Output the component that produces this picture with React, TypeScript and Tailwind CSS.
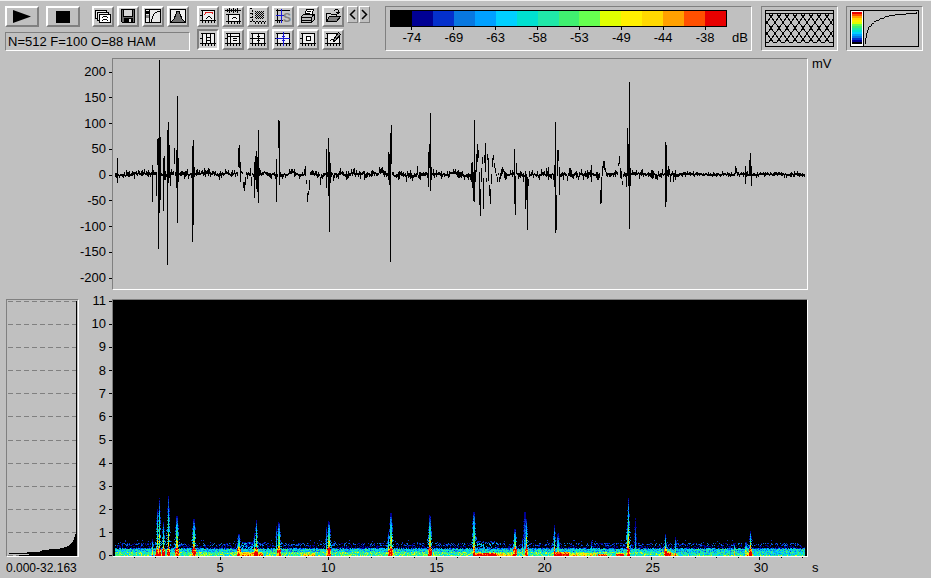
import type { ReactNode } from "react";

const PALETTE = [
  "#000000", "#000094", "#0430cc", "#0878e0", "#00a0ff", "#00d0ff", "#00e0d0", "#20e8a8",
  "#40f070", "#66ff50", "#e0ff00", "#fff000", "#ffd800", "#ffa000", "#ff5000", "#e80000",
];
const DB_LABELS = ["-74", "-69", "-63", "-58", "-53", "-49", "-44", "-38"];
const MV_LABELS = [200, 150, 100, 50, 0, -50, -100, -150, -200];
const KHZ_LABELS = [11, 10, 9, 8, 7, 6, 5, 4, 3, 2, 1, 0];
const SECONDS = [5, 10, 15, 20, 25, 30];
const PLOT_WIDTH = 694;
const DURATION = 32.163;

/* Small seeded generator, so the background noise is the same on every render. */
function makeRandom(seed: number) {
  let s = seed;
  return () => {
    s = (s + 0x6d2b79f5) | 0;
    let t = Math.imul(s ^ (s >>> 15), 1 | s);
    t = (t + Math.imul(t ^ (t >>> 7), 61 | t)) ^ t;
    return ((t ^ (t >>> 14)) >>> 0) / 4294967296;
  };
}

/* Recorded peaks: column, top, bottom. */
const PEAKS: [number, number, number][] = [
  [4, 99, 124], [39, 106, 143], [43, 113, 137], [44, 80, 106], [45, 79, 190], [46, 1, 154], [47, 78, 141],
  [50, 99, 152], [51, 97, 121], [54, 71, 206], [55, 63, 124], [56, 86, 119], [57, 113, 127], [61, 89, 105],
  [63, 91, 129], [64, 37, 164], [65, 99, 123], [79, 87, 183], [80, 81, 166], [81, 108, 118], [91, 109, 116],
  [125, 89, 108], [126, 86, 109], [127, 103, 123], [130, 123, 129], [131, 123, 132], [132, 118, 126],
  [137, 109, 117], [138, 118, 127], [141, 103, 139], [142, 97, 121], [143, 92, 130], [144, 98, 133],
  [145, 71, 144], [146, 109, 117], [163, 100, 143], [165, 61, 89], [166, 62, 126], [167, 113, 118],
  [192, 107, 117], [193, 121, 125], [194, 134, 143], [195, 132, 136], [196, 121, 131], [199, 111, 116],
  [207, 118, 126], [213, 90, 129], [215, 79, 137], [216, 93, 173], [217, 104, 124], [220, 116, 122],
  [266, 108, 114], [275, 93, 121], [276, 95, 126], [277, 74, 203], [278, 66, 105], [293, 116, 123],
  [304, 107, 116], [315, 93, 128], [316, 85, 109], [317, 54, 132], [318, 108, 121], [358, 104, 123],
  [359, 103, 129], [360, 113, 142], [361, 61, 143], [362, 111, 123], [363, 95, 113], [364, 85, 103],
  [365, 91, 99], [366, 113, 146], [367, 130, 157], [368, 109, 123], [369, 98, 105], [370, 119, 150],
  [371, 96, 104], [372, 84, 113], [373, 119, 123], [374, 95, 101], [375, 99, 122], [376, 126, 137],
  [377, 130, 145], [378, 115, 125], [379, 99, 108], [380, 96, 101], [381, 104, 109], [382, 109, 114],
  [384, 118, 123], [386, 118, 123], [389, 108, 115], [390, 110, 113], [401, 90, 145], [402, 117, 156],
  [403, 104, 115], [410, 114, 123], [412, 112, 150], [413, 115, 141], [414, 118, 171], [415, 120, 127],
  [433, 109, 118], [435, 108, 121], [441, 106, 128], [442, 63, 174], [443, 136, 171], [444, 91, 117],
  [445, 91, 102], [446, 108, 136], [454, 117, 122], [457, 109, 118], [465, 117, 121], [478, 106, 123],
  [487, 131, 145], [488, 118, 144], [489, 107, 117], [490, 102, 109], [491, 102, 111], [492, 109, 113],
  [505, 104, 107], [506, 97, 105], [507, 109, 119], [509, 122, 126], [513, 114, 128], [514, 69, 117],
  [515, 85, 127], [516, 23, 170], [517, 109, 127], [552, 83, 148], [553, 86, 143], [555, 107, 118],
  [557, 115, 123], [560, 114, 123], [562, 111, 121], [622, 107, 115], [623, 109, 114], [632, 107, 125],
  [636, 101, 117], [637, 94, 117], [638, 107, 127], [681, 112, 118],
];

function waveformPath() {
  const rnd = makeRandom(11);
  const peaks = new Set(PEAKS.map(([x]) => x));
  let d = "";
  for (const [x, top, bottom] of PEAKS) {
    d += `M${x} ${top}h1V${bottom}h-1z`;
  }
  let drift = 0;
  for (let x = 2; x < 692; x++) {
    const a = rnd();
    const b = rnd();
    drift = drift * 0.75 + (rnd() - 0.5) * (x > 560 ? 0.8 : 2);
    if (peaks.has(x)) continue;
    const calm = x > 560 ? 0.5 : 1;
    const up = Math.round(a * a * a * 4 * calm);
    const down = Math.round(b * b * b * 4 * calm);
    const mid = Math.round(114.4 + drift);
    d += `M${x} ${mid - up}h1v${up + down + 2}h-1z`;
  }
  return d;
}

/* Bursts in the spectrogram: column, height, strength, width. */
const BURSTS: [number, number, number, number][] = [
  [39, 18, 0.8, 1], [44, 50, 0.95, 1], [46, 60, 1, 1], [50, 36, 1, 1], [55, 63, 1, 1], [63, 42, 1, 2],
  [80, 38, 1.05, 2], [125, 23, 0.95, 2], [141, 24, 0.8, 1], [143, 38, 1, 1], [163, 32, 0.6, 1], [165, 35, 1, 2],
  [213, 32, 0.6, 1], [215, 36, 1.05, 2], [275, 25, 0.85, 1], [277, 45, 1, 2], [316, 42, 1.05, 2],
  [360, 47, 0.9, 2], [401, 28, 1, 2], [409, 20, 0.6, 1], [411, 51, 0.4, 2], [413, 38, 1.05, 1], [441, 32, 0.9, 1],
  [444, 24, 0.6, 2], [478, 17, 0.55, 1], [514, 36, 0.9, 1], [515, 61, 1, 1], [522, 42, 0.45, 1],
  [552, 23, 0.95, 1], [562, 20, 0.65, 1], [621, 13, 0.8, 1], [632, 15, 0.7, 2], [637, 26, 1.1, 1],
];
/* Low-frequency energy: start, end, strength, height. */
const HUMPS: [number, number, number, number][] = [
  [128, 150, 0.35, 4], [190, 202, 0.25, 3], [360, 384, 0.6, 3], [384, 400, 0.25, 3], [441, 456, 0.6, 4],
  [456, 484, 0.22, 3], [485, 494, 0.5, 2], [503, 511, 0.5, 3], [552, 558, 0.6, 5], [558, 565, 0.3, 3],
  [634, 640, 0.35, 4], [42, 52, 0.3, 4],
];

function spectrogramPaths() {
  const rnd = makeRandom(77);
  const paths: string[] = PALETTE.map(() => "");
  for (let x = 2; x < 692; x++) {
    for (let h = 0; h < 66; h++) {
      const n = rnd();
      let v = 0;
      if (h < 1) v = 0.3 + n * 0.4;
      else if (h < 4) v = (x < 560 ? 0.34 : 0.24) + n * 0.34;
      else if (h < 7) v = 0.18 + n * 0.36;
      else if (h < 8) v = n * 0.36;
      else if (h < 10) v = n > 0.65 ? 0.1 : 0;
      else if (h < 13) v = n > 0.55 ? (n - 0.5) * 0.5 : 0;
      else if (h < 16) v = n > 0.97 ? 0.13 : 0;
      if (x > 128 && x < 146 && h > 7 && h < 14) v += n * 0.22;
      if (x > 360 && x < 384 && h > 7 && h < 15) v += n > 0.5 ? 0.16 : 0;
      for (const [bx, height, strength, width] of BURSTS) {
        const f = 1 - h / height;
        if (f <= 0 || x < bx - 2 || x > bx + width + 1) continue;
        const inside = x >= bx && x < bx + width;
        const beside = x >= bx - 1 && x <= bx + width;
        if (inside) {
          v = Math.max(v, strength * Math.pow(f, 0.9) * (0.6 + n * 0.5) + (h < 9 ? 0.2 * strength : 0));
        } else if (beside) {
          if (h < 7 && strength > 0.9) v = Math.max(v, 0.65 + n * 0.45);
          else if (f > 0.25 && n > 0.5) v = Math.max(v, strength * f * n * 0.55);
        } else if (f > 0.6 && n > 0.75) {
          v = Math.max(v, strength * f * n * 0.4);
        }
      }
      for (const [a, b, strength, height] of HUMPS) {
        if (x >= a && x < b && h < height) v += strength * (1 - h / (height + 2));
      }
      const level = Math.min(15, Math.floor(v * 16));
      if (level > 0) paths[level] += `M${x} ${255 - h}h1v1h-1z`;
    }
  }
  return paths;
}

const WAVEFORM = waveformPath();
const SPECTROGRAM = spectrogramPaths();

/* Mean spectrum at the foot of the left panel: row, first column. */
const SPECTRUM: [number, number][] = [
  [228, 69], [234, 68], [237, 67], [240, 66], [242, 65], [243, 64], [244, 63], [245, 62], [246, 60],
  [247, 57], [248, 53], [249, 42], [250, 35], [251, 33], [252, 20], [253, 2], [254, 22], [255, 12],
];

const bevel = "border-2 border-t-white border-l-white border-r-[#808080] border-b-[#808080]";
const sunken = "border border-t-[#808080] border-l-[#808080] border-r-white border-b-white";

function ToolButton({ label, children, pressed = false }: { label: string; children: ReactNode; pressed?: boolean }) {
  return (
    <button
      type="button"
      aria-label={label}
      title={label}
      className={
        pressed
          ? "h-[21px] w-[22px] border-2 border-t-[#808080] border-l-[#808080] border-r-white border-b-white bg-[#d0d0d0]"
          : `h-[21px] w-[22px] bg-[#c8c8c8] ${bevel}`
      }
    >
      <svg viewBox="-1 0 18 17" className="block h-[17px] w-[18px]" shapeRendering="crispEdges" fill="none" stroke="#000">
        {children}
      </svg>
    </button>
  );
}

/* Chart frame with axis ticks, shared by most of the toolbar icons. */
function Frame() {
  return (
    <>
      <rect x="3" y="3" width="11" height="9" fill="#f0f0f0" stroke="none" />
      <path d="M2.5 2v13M14.5 2v13M1 2.5h14M0 12.5h16M0 7.5h2M5.5 13v2M8.5 13v2M11.5 13v2" />
    </>
  );
}

function WideButton({ label, children }: { label: string; children: ReactNode }) {
  return (
    <button
      type="button"
      aria-label={label}
      title={label}
      className={`flex h-[21px] w-[34px] items-center justify-center bg-[#c0c0c0] ${bevel}`}
    >
      {children}
    </button>
  );
}

function Toolbar() {
  return (
    <header className="flex items-start pt-[5px] pr-2 pl-[5px]">
      <div className="w-[185px] shrink-0">
        <div className="flex">
          <WideButton label="Play">
            <svg viewBox="0 0 20 13" className="h-[13px] w-5">
              <path d="M1 0L19 6.5L1 13z" fill="#000" />
            </svg>
          </WideButton>
          <div className="ml-[7px]">
            <WideButton label="Stop">
              <span className="h-3 w-[14px] bg-black" />
            </WideButton>
          </div>
          <div className="ml-3 flex gap-[3px]">
            <ToolButton label="Windows">
              <rect x="0.5" y="2.5" width="11" height="8" fill="#e8e8e8" />
              <rect x="2.5" y="4.5" width="11" height="8" fill="#e8e8e8" />
              <rect x="4.5" y="6.5" width="11" height="8" fill="#fff" />
              <path d="M7 9.5h1M8 8.5h4M12 9.5h1M7 12.5h1M8 11.5h4M12 12.5h1" />
            </ToolButton>
            <ToolButton label="Save">
              <path d="M1.5 1.5h13v13h-12l-1-1z" fill="#686868" />
              <rect x="4" y="2" width="8" height="6" fill="#d8d8d8" stroke="none" />
              <path d="M3.5 2v6.5h9V2" />
              <rect x="4" y="10" width="9" height="4" fill="#000" stroke="none" />
              <rect x="9" y="11" width="2" height="3" fill="#e0e0e0" stroke="none" />
            </ToolButton>
            <ToolButton label="Transfer curve">
              <rect x="0.5" y="1.5" width="15" height="13" fill="#e8e8e8" />
              <path d="M4.5 2v12" />
              <rect x="1" y="3" width="3" height="3" fill="#000" stroke="none" />
              <rect x="1" y="7" width="3" height="3" fill="#808080" stroke="none" />
              <path d="M6.5 14v-3M7.5 11V8M8.5 8V6M9.5 6V5M10 4.5h2M12 3.5h3" />
            </ToolButton>
            <ToolButton label="Window function">
              <rect x="0.5" y="1.5" width="15" height="13" fill="#f0f0f0" />
              <path d="M1 14l3-3l2-5l1-3h2l1 3l2 5l3 3z" fill="#707070" />
            </ToolButton>
          </div>
        </div>
        <div className={`mt-[5px] h-[19px] pl-[2px] text-[13px] leading-[17px] whitespace-nowrap ${sunken}`}>
          N=512 F=100 O=88 HAM
        </div>
      </div>

      <div className="ml-[7px] grid shrink-0 grid-cols-6 gap-x-[3px] gap-y-[2px]">
        <ToolButton label="Envelope">
          <Frame />
          <path d="M4 6.5h1M5.5 4v2M6 4.5h6M12.5 4v2" stroke="#e02020" />
          <path d="M6 10.5h1M7 9.5h1M8 8.5h2M10 9.5h1M11 10.5h1" />
        </ToolButton>
        <ToolButton label="Waveform">
          <rect x="4" y="7" width="10" height="6" fill="#f0f0f0" stroke="none" />
          <path d="M0 2.5h16M2.5 1v3M4.5 0v5M6.5 1v3M8.5 0v5M10.5 1v3M12.5 0v5M3.5 6v10M14.5 6v10M1 6.5h14M1 13.5h15M6.5 14v2M9.5 14v2M12.5 14v2M7 10.5h1M8 9.5h3M11 10.5h1" />
        </ToolButton>
        <ToolButton label="Select area">
          <rect x="5" y="3" width="9" height="8" fill="#c0c0c0" stroke="none" />
          <path d="M5 3.5h9M5 5.5h9M5 7.5h9M5 9.5h9" strokeDasharray="1 1" />
          <path d="M6 4.5h8M6 6.5h8M6 8.5h8M6 10.5h8" strokeDasharray="1 1" />
          <path d="M0 .5h2M2.5 2v12M0 13.5h16M0 5.5h2M0 9.5h2M5.5 14v2M8.5 14v2M11.5 14v2M14.5 14v2" strokeDasharray="2 1" />
        </ToolButton>
        <ToolButton label="Standard cursor">
          <path d="M2.5 1v14M1 2.5h14M0 12.5h8M4.5 13v2" />
          <path d="M6.5 1v14M1 7.5h8" stroke="#1818d8" />
          <text x="8" y="14" fontSize="12" fontWeight="bold" fill="#808080" stroke="none" className="font-['Liberation_Sans',sans-serif]">S</text>
        </ToolButton>
        <ToolButton label="Print">
          <path d="M4.5 7.5l2-6h7l-2 6z" fill="#fff" />
          <path d="M7 3.5h4M6 5.5h4" />
          <path d="M1.5 8.5l2-2h11v5l-3 3h-10z" fill="#b8b8b8" />
          <path d="M1 9.5h10M11.5 9v5M2 12.5h9M12 8.5l2-2" />
        </ToolButton>
        <ToolButton label="Open">
          <path d="M1.5 13.5v-8h4l1 1h5v2" fill="#d0d0d0" />
          <path d="M1.5 13.5l3-5h11l-4 5z" fill="#808080" />
          <path d="M9 2.5h1M10 1.5h3M13.5 2v3M11 4.5h4M12 5.5h2" />
        </ToolButton>

        <ToolButton label="Vertical cursors" pressed>
          <Frame />
          <path d="M6.5 2v10M10.5 2v10M7 6.5h3M7 9.5h3" />
        </ToolButton>
        <ToolButton label="Horizontal cursor">
          <Frame />
          <path d="M3 5.5h11M5.5 3v9M8 7.5h4M8 9.5h4" />
        </ToolButton>
        <ToolButton label="Crosshair">
          <Frame />
          <path d="M8.5 2v10M3 7.5h12M7 5.5h3M7 9.5h3" />
        </ToolButton>
        <ToolButton label="Linked crosshair">
          <Frame />
          <path d="M8.5 1v14M1 7.5h14M7 5.5h3M7 9.5h3" stroke="#1818d8" />
        </ToolButton>
        <ToolButton label="Zoom area">
          <Frame />
          <rect x="6.5" y="5.5" width="4" height="4" fill="#fff" />
        </ToolButton>
        <ToolButton label="Edit label">
          <Frame />
          <path d="M5 9.5h1M6 8.5h2M8 10.5h2" />
          <path d="M8.5 8.5l5-7l2 2l-5 6l-2 1z" fill="#909090" />
        </ToolButton>
      </div>

      <div className="ml-[3px] flex shrink-0 gap-px">
        {["Previous", "Next"].map((name, i) => (
          <button
            key={name}
            type="button"
            aria-label={name}
            className="flex h-[17px] w-[11px] items-center justify-center border border-t-white border-l-white border-r-[#808080] border-b-[#808080]"
          >
            <svg viewBox="0 0 7 11" className="h-[11px] w-[7px]" fill="none" stroke="#000" strokeWidth="1.5">
              <path d={i === 0 ? "M6 1L1.5 5.5L6 10" : "M1 1L5.5 5.5L1 10"} />
            </svg>
          </button>
        ))}
      </div>

      <div className={`ml-[15px] flex h-[45px] min-w-0 flex-1 pt-[3px] pl-1 ${sunken}`}>
        <div className="min-w-0 flex-1">
          <div className="flex h-[17px] border border-black">
            {PALETTE.map((color) => (
              <span key={color} className="flex-1" style={{ backgroundColor: color }} />
            ))}
          </div>
          <div className="grid grid-cols-8 px-px">
            {DB_LABELS.map((label) => (
              <span key={label} className="flex flex-col items-center text-[13px] leading-[14px]">
                <i className="mb-px h-[3px] w-px bg-black" />
                {label}
              </span>
            ))}
          </div>
        </div>
        <span className="w-6 self-end pb-[5px] pl-[5px] text-[13px] leading-[14px]">dB</span>
      </div>

      <div className={`ml-[9px] h-[45px] w-[77px] shrink-0 p-[3px] ${sunken}`}>
        <svg viewBox="0 0 69 37" className="h-[37px] w-[69px]" fill="none" stroke="#000" shapeRendering="crispEdges">
          <clipPath id="mesh">
            <rect x="1" y="3" width="67" height="31" />
          </clipPath>
          <rect x="0.5" y="0.5" width="68" height="36" />
          <path d="M1 3.5h67" />
          <path d={Array.from({ length: 9 }, (_, i) => `M${i * 8} 32.5h4`).join("")} clipPath="url(#mesh)" />
          <path
            d={Array.from({ length: 14 }, (_, i) => {
              const x = i * 8 - 28;
              return `M${x} 4l20 28M${x + 20} 4l-20 28`;
            }).join("")}
            clipPath="url(#mesh)"
          />
        </svg>
      </div>

      <div className={`ml-2 h-[45px] w-[77px] shrink-0 p-[3px] ${sunken}`}>
        <svg viewBox="0 0 69 37" className="h-[37px] w-[69px]" fill="none" stroke="#000" shapeRendering="crispEdges">
          <rect x="1" y="1" width="12" height="35" fill="#fff" stroke="none" />
          {PALETTE.map((color, i) => (
            <rect key={color} x="2" y={32 - i * 2} width="10" height="2" fill={color} stroke="none" />
          ))}
          <rect x="0.5" y="0.5" width="68" height="36" />
          <path d="M13.5 1v35" />
          <path d="M15.5 34v-6M16.5 28v-5M17.5 23v-3M18.5 20v-3M19 16.5h2M21.5 16v-2M22 13.5h2M24 11.5h2M26 10.5h3M29 9.5h1M30 8.5h4M34 7.5h1M35 6.5h4M39 5.5h6M45 4.5h11M56 3.5h11M66.5 2v2" />
        </svg>
      </div>
    </header>
  );
}

function AxisLabels({ values }: { values: number[] }) {
  return (
    <>
      {values.map((value) => (
        <div key={value} className="flex items-center justify-end gap-[3px] text-[13px] leading-[14px]">
          {value}
          <i className="h-px w-[3px] bg-black" />
        </div>
      ))}
    </>
  );
}

export default function App() {
  return (
    <div className="min-h-screen overflow-hidden border-t border-[#f0f0f0] bg-[#c0c0c0] font-['Liberation_Sans',Arial,sans-serif] text-black">
      <Toolbar />

      <section aria-label="Waveform" className="mt-[7px] flex">
        <div className="flex w-28 shrink-0 flex-col justify-between pt-[7px] pb-[5px]">
          <AxisLabels values={MV_LABELS} />
        </div>
        <div className={`min-w-0 flex-1 ${sunken}`}>
          <svg
            viewBox={`0 0 ${PLOT_WIDTH} 230`}
            preserveAspectRatio="none"
            className="block h-[230px] w-full"
            shapeRendering="crispEdges"
          >
            <path d={WAVEFORM} />
          </svg>
        </div>
        <div className="w-[123px] shrink-0 pl-1 text-[13px] leading-3">mV</div>
      </section>

      <section aria-label="Spectrogram" className="mt-1 flex items-start">
        <div className="ml-[6px] w-[73px] shrink-0 pt-[5px]">
          <div className={sunken}>
            <svg viewBox="0 0 71 256" className="block h-64 w-full" shapeRendering="crispEdges">
              {KHZ_LABELS.map((k) => (
                <path key={k} d={`M1 ${Math.round(255 - k * 23.1) + 0.5}h69`} stroke="#808080" strokeDasharray="5 3" />
              ))}
              <path d="M69.5 1v255" stroke="#000" />
              {SPECTRUM.map(([y, x], i) => (
                <rect key={y} x={x} y={y} width={70 - x} height={(SPECTRUM[i + 1]?.[0] ?? 256) - y} />
              ))}
            </svg>
          </div>
          <div className="mt-1 text-[12px] leading-[14px] whitespace-nowrap">0.000-32.163</div>
        </div>
        <div className="flex h-[269px] w-[33px] shrink-0 flex-col justify-between">
          <AxisLabels values={KHZ_LABELS} />
        </div>
        <div className="min-w-0 flex-1 pt-[5px]">
          <div className={`bg-black ${sunken}`}>
            <svg
              viewBox={`0 0 ${PLOT_WIDTH} 256`}
              preserveAspectRatio="none"
              className="block h-64 w-full"
              shapeRendering="crispEdges"
            >
              {SPECTROGRAM.map((d, i) => (d ? <path key={PALETTE[i]} d={d} fill={PALETTE[i]} /> : null))}
            </svg>
          </div>
          <svg viewBox="0 0 696 4" preserveAspectRatio="none" className="block h-1 w-full" shapeRendering="crispEdges">
            {Array.from({ length: 32 }, (_, i) => (
              <rect key={i} x={Math.round(((i + 1) * PLOT_WIDTH) / DURATION)} y="0" width="1" height={(i + 1) % 5 === 0 ? 3 : 1} />
            ))}
          </svg>
          <div className="-mr-[7px] grid grid-cols-[2.5fr_5fr_5fr_5fr_5fr_5fr_5fr] text-center text-[13px] leading-[14px]">
            <span />
            {SECONDS.map((s) => (
              <span key={s}>{s}</span>
            ))}
          </div>
        </div>
        <div className="w-[123px] shrink-0 self-end pl-1 text-[13px] leading-[14px]">s</div>
      </section>
    </div>
  );
}
